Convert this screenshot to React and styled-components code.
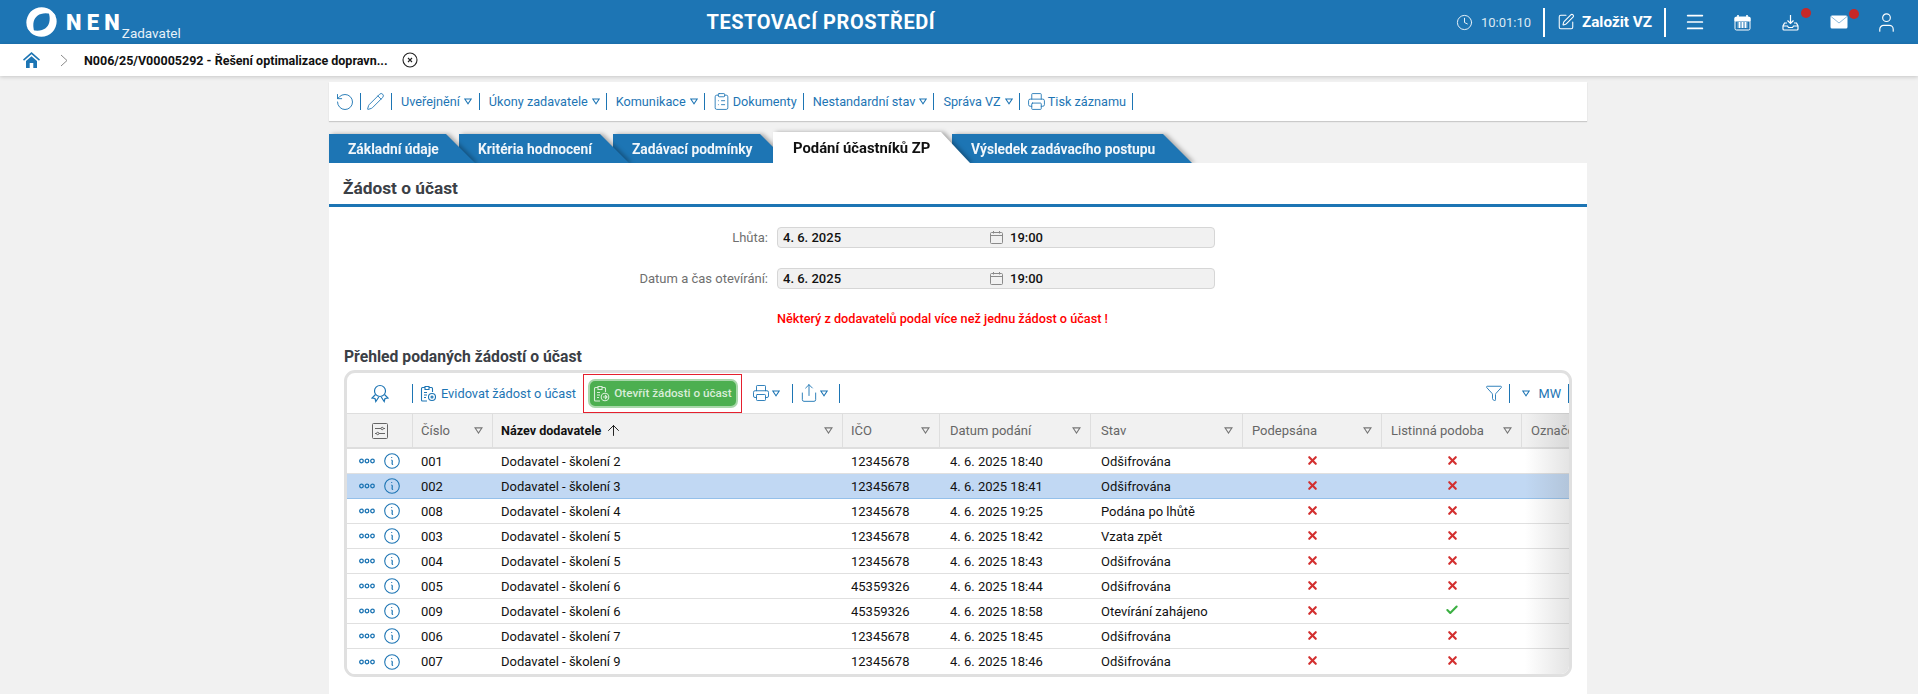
import React from "react";
import styled, { createGlobalStyle } from "styled-components";
import {
  ArrowUp,
  Check,
  Clock,
  ClipboardList,
  Funnel,
  Menu,
  Pencil,
  Printer,
  RotateCcw,
  Share,
  SquarePen,
  User,
  X,
} from "lucide-react";

const BLUE = "#1d75b4";
const COLUMNS = "66px 80px 350px 97px 151px 152px 139px 140px 47px";

const rows = [
  ["001", "Dodavatel - školení 2", "12345678", "4. 6. 2025 18:40", "Odšifrována", false],
  ["002", "Dodavatel - školení 3", "12345678", "4. 6. 2025 18:41", "Odšifrována", false],
  ["008", "Dodavatel - školení 4", "12345678", "4. 6. 2025 19:25", "Podána po lhůtě", false],
  ["003", "Dodavatel - školení 5", "12345678", "4. 6. 2025 18:42", "Vzata zpět", false],
  ["004", "Dodavatel - školení 5", "12345678", "4. 6. 2025 18:43", "Odšifrována", false],
  ["005", "Dodavatel - školení 6", "45359326", "4. 6. 2025 18:44", "Odšifrována", false],
  ["009", "Dodavatel - školení 6", "45359326", "4. 6. 2025 18:58", "Otevírání zahájeno", true],
  ["006", "Dodavatel - školení 7", "12345678", "4. 6. 2025 18:45", "Odšifrována", false],
  ["007", "Dodavatel - školení 9", "12345678", "4. 6. 2025 18:46", "Odšifrována", false],
];

const tabs = [
  { label: "Základní údaje", width: 146, z: 5 },
  { label: "Kritéria hodnocení", width: 170, z: 4 },
  { label: "Zadávací podmínky", width: 176, z: 3 },
  { label: "Podání účastníků ZP", width: 197, z: 6, active: true },
  { label: "Výsledek zadávacího postupu", width: 240, z: 1 },
];

const GlobalStyle = createGlobalStyle`
  html, body {
    margin: 0;
    height: 100%;
    overflow: hidden;
    background: #f1f1f1;
    font-family: Roboto, "Liberation Sans", sans-serif;
    font-size: 13px;
  }
  #root { height: 100%; }
`;

const Page = styled.div`
  height: 100%;
  display: flex;
  flex-direction: column;
`;

const Header = styled.header`
  height: 44px;
  flex: none;
  background: ${BLUE};
  color: #fff;
  display: flex;
  align-items: center;
  justify-content: space-between;
  padding: 0 23px 0 25px;
`;

const Brand = styled.div`
  display: flex;
  align-items: center;
`;

const BrandName = styled.span`
  margin-left: 8px;
  font-size: 22px;
  font-weight: 900;
  letter-spacing: 5.2px;
`;

const BrandRole = styled.span`
  margin: 22px 0 0 -3px;
  font-size: 13.5px;
  color: #e8f1f8;
`;

const EnvTitle = styled.div`
  font-size: 20px;
  font-weight: 700;
  letter-spacing: 0.55px;
  margin-left: 5px;
`;

const HeaderTools = styled.div`
  display: flex;
  align-items: center;
`;

const HeaderTime = styled.span`
  margin-left: 8px;
  width: 62px;
  color: #dce9f3;
`;

const HeaderRule = styled.span`
  width: 2px;
  height: 29px;
  background: #fff;
`;

const CreateLink = styled.span`
  display: flex;
  align-items: center;
  gap: 7px;
  padding: 0 12px;
  font-size: 15.3px;
  font-weight: 700;
`;

const HeaderIcon = styled.span`
  position: relative;
  display: flex;
  justify-content: center;
  width: 17px;
  margin-left: ${(p) => p.$gap}px;

  svg {
    flex: none;
  }
`;

const Dot = styled.i`
  position: absolute;
  top: -6px;
  right: -12px;
  width: 10px;
  height: 10px;
  border-radius: 50%;
  background: #c62828;
`;

const Crumbs = styled.nav`
  height: 32px;
  flex: none;
  background: #fff;
  box-shadow: 0 1px 4px rgba(0, 0, 0, 0.18);
  display: flex;
  align-items: center;
  padding-left: 23px;
  position: relative;
`;

const CrumbChevron = styled.svg`
  margin-left: 20px;
  margin-right: 16px;
`;

const CrumbText = styled.span`
  font-size: 12.5px;
  font-weight: 700;
  color: #111;
  width: 318px;
  white-space: nowrap;
`;

const Main = styled.main`
  flex: 1;
  width: 1258px;
  margin-left: 329px;
  padding-top: 6px;
  display: flex;
  flex-direction: column;
  min-height: 0;
`;

const Toolbar = styled.div`
  height: 39px;
  flex: none;
  background: #fff;
  box-shadow: 0 1px 1px rgba(0, 0, 0, 0.16);
  display: flex;
  align-items: center;
  font-size: 12.7px;
`;

const ToolItem = styled.span`
  height: 17px;
  display: flex;
  align-items: center;
  gap: ${(p) => p.$gap ?? 4}px;
  padding: 0 ${(p) => p.$right ?? 6}px 0 ${(p) => p.$left ?? 9}px;
  border-right: 1px solid ${BLUE};
  color: ${BLUE};
  white-space: nowrap;
`;

const TabRow = styled.div`
  height: 31px;
  flex: none;
  margin-top: 11px;
  display: flex;
  align-items: flex-end;
`;

const Tab = styled.div`
  width: ${(p) => p.$width}px;
  margin-left: ${(p) => p.$overlap}px;
  z-index: ${(p) => p.$z};
  filter: drop-shadow(3px 0 2px rgba(0, 0, 0, 0.3));
`;

const TabFace = styled.div`
  height: ${(p) => (p.$active ? 31 : 29)}px;
  padding: ${(p) => (p.$active ? "8px 0 0 20px" : "7px 0 0 19px")};
  box-sizing: border-box;
  background: ${(p) => (p.$active ? "#fff" : BLUE)};
  color: ${(p) => (p.$active ? "#111" : "#f1f6fa")};
  font-weight: 700;
  font-size: ${(p) => (p.$active ? 14.8 : 13.8)}px;
  line-height: 16px;
  white-space: nowrap;
  clip-path: polygon(0 0, calc(100% - 29px) 0, 100% 100%, 0 100%);
`;

const Panel = styled.section`
  flex: 1;
  background: #fff;
  position: relative;
  z-index: 7;
  min-height: 0;
`;

const PanelTitle = styled.h2`
  margin: 0;
  height: 41px;
  box-sizing: border-box;
  padding: 14px 0 0 14px;
  font-size: 17.3px;
  line-height: 22px;
  font-weight: 700;
  color: #3b4046;
`;

const PanelRule = styled.div`
  height: 3px;
  background: ${BLUE};
`;

const FormGrid = styled.div`
  display: grid;
  grid-template-columns: 439px 438px;
  column-gap: 9px;
  row-gap: 20px;
  margin-top: 20px;
  align-items: center;
`;

const FormLabel = styled.label`
  text-align: right;
  color: #6f6f6f;
`;

const Field = styled.div`
  height: 21px;
  box-sizing: border-box;
  display: flex;
  align-items: center;
  padding-left: 5px;
  background: #f1f1f1;
  border: 1px solid #d6d6d6;
  border-radius: 4px;
  font-weight: 500;
  color: #111;
`;

const FieldDate = styled.span`
  width: 207px;
`;

const FieldTime = styled.span`
  margin-left: 7px;
`;

const Warning = styled.div`
  margin: 22px 0 0 448px;
  line-height: 16px;
  font-size: 12.7px;
  font-weight: 500;
  color: #f00;
`;

const SectionTitle = styled.h3`
  margin: 20px 0 0 15px;
  font-size: 15.7px;
  line-height: 20px;
  font-weight: 700;
  color: #3b4046;
`;

const Card = styled.div`
  position: relative;
  margin: 3px 15px 0 15px;
  border: 3px solid #e0e0e0;
  border-radius: 11px;
  overflow: hidden;
  background: #fff;
`;

const CardBar = styled.div`
  height: 40px;
  display: flex;
  align-items: center;
  font-size: 12.8px;
`;

const AwardSlot = styled.span`
  width: 65px;
  height: 19px;
  display: flex;
  align-items: center;
  justify-content: center;
  border-right: 1px solid ${BLUE};
  color: ${BLUE};
`;

const Highlight = styled.div`
  margin-left: 7px;
  box-sizing: border-box;
  width: 159px;
  height: 39px;
  border: 1px solid #e5202e;
  display: flex;
  align-items: center;
  justify-content: center;
`;

const GreenButton = styled.button`
  width: 150px;
  height: 29px;
  box-sizing: border-box;
  display: flex;
  align-items: center;
  justify-content: center;
  gap: 4px;
  padding: 0;
  background: #4caf50;
  border: 2px solid #a9d8ab;
  border-radius: 7px;
  color: #d9edd9;
  font: 500 11.7px Roboto, sans-serif;
`;

const BarLink = styled.span`
  display: flex;
  align-items: center;
  gap: ${(p) => p.$gap ?? 4}px;
  height: 19px;
  padding: 0 ${(p) => p.$right ?? 6}px 0 ${(p) => p.$left ?? 9}px;
  color: ${BLUE};
  white-space: nowrap;
  border-right: ${(p) => (p.$plain ? "none" : `1px solid ${BLUE}`)};
`;

const BarSpacer = styled.span`
  flex: 1;
`;

const GridHead = styled.div`
  display: grid;
  grid-template-columns: ${COLUMNS};
  height: 36px;
  box-sizing: border-box;
  background: #f1f1f1;
  border-top: 1px solid #dedede;
  border-bottom: 2px solid #dedede;
`;

const HeadCell = styled.div`
  display: flex;
  align-items: center;
  justify-content: ${(p) => (p.$center ? "center" : "flex-start")};
  padding: 0 9px 0 ${(p) => p.$pad ?? 9}px;
  gap: 4px;
  overflow: hidden;
  white-space: nowrap;
  color: ${(p) => (p.$sorted ? "#111" : "#666")};
  font-weight: ${(p) => (p.$sorted ? 700 : 400)};
  font-size: ${(p) => (p.$sorted ? 12.6 : 13)}px;
  border-right: ${(p) => (p.$last ? "none" : "1px solid #dedede")};
`;

const HeadFilter = styled.span`
  margin-left: auto;
  display: flex;
`;

const GridRow = styled.div`
  display: grid;
  grid-template-columns: ${COLUMNS};
  height: 25px;
  box-sizing: border-box;
  align-items: center;
  color: #111;
  background: ${(p) => (p.$selected ? "#c1d8f3" : "#fff")};
  border-bottom: ${(p) => (p.$last ? "none" : p.$selected ? "1px solid #94c0ea" : "1px solid #e0e0e0")};
`;

const RowActions = styled.div`
  display: flex;
  align-items: center;
  gap: 9px;
  padding-left: 12px;
`;

const Cell = styled.div`
  padding-left: ${(p) => p.$pad ?? 8}px;
  white-space: nowrap;
`;

const MarkCell = styled.div`
  display: flex;
  justify-content: center;
  margin-top: -2px;
`;

const RightFade = styled.div`
  position: absolute;
  top: 40px;
  right: 0;
  bottom: 0;
  width: 44px;
  pointer-events: none;
  background: linear-gradient(to right, rgba(120, 120, 120, 0), rgba(120, 120, 120, 0.2));
`;

const Triangle = () => (
  <svg width="8" height="7" viewBox="0 0 10 8" fill="none" stroke={BLUE} strokeWidth="1.3">
    <path d="M1 1h8L5 7z" />
  </svg>
);

const GreyTriangle = () => (
  <svg width="9" height="7" viewBox="0 0 10 8" fill="none" stroke="#777" strokeWidth="1.2">
    <path d="M1 1h8L5 7z" />
  </svg>
);

const Swoosh = ({ flip }) => (
  <path
    transform={flip ? "rotate(180 17 17)" : undefined}
    d="M2.300 24A16 16 0 0 1 32 11C27.500 8 21.500 7 16.500 8.500 10.500 10 7.500 16 8.500 23c.3 2.500 .8 4.500 1.500 6-3-1-6.400-2.500-7.700-5z"
  />
);

const Logo = () => (
  <svg width="33" height="32" viewBox="0 0 34 34" fill="#fff">
    <Swoosh />
    <Swoosh flip />
  </svg>
);

const HomeIcon = () => (
  <svg width="17" height="16" viewBox="0 0 17 16" fill={BLUE}>
    <path d="M8.500 0L0 7.500l1 1.200 7.500-6.400L16 8.700l1-1.200z" />
    <path d="M3 9l5.500-4.700L14 9v7h-3.700v-5H6.700v5H3z" />
  </svg>
);

const CalendarIcon = () => (
  <svg width="17" height="17" viewBox="0 0 17 17" fill="none" stroke="#fff">
    <rect x="1" y="3" width="15" height="13" rx="1.500" strokeWidth="1" />
    <path d="M1 3.500h15V7H1z" fill="#fff" />
    <path d="M4 1v3M13 1v3" strokeWidth="1.600" />
    <path d="M3.500 9h10M3.500 11h10M3.500 13h10M5.500 8v6M8.500 8v6M11.500 8v6" strokeWidth="1" />
  </svg>
);

const DownloadIcon = () => (
  <svg width="17" height="17" viewBox="0 0 17 17" fill="none" stroke="#fff" strokeWidth="1.200">
    <path d="M8.500 1v8M5.500 6.500l3 3 3-3" />
    <path d="M5 9H2.500L1 12v3a1 1 0 0 0 1 1h13a1 1 0 0 0 1-1v-3l-1.500-3H12" />
    <path d="M1 12h4.500l1 1.500h4l1-1.500H16" />
  </svg>
);

const MailIcon = () => (
  <svg width="18" height="14" viewBox="0 0 18 14">
    <rect x="0.500" y="0.500" width="17" height="13" rx="1.500" fill="#fff" />
    <path d="M1 1.500l8 6.500 8-6.500" fill="none" stroke="#8dbbdc" strokeWidth="1" />
  </svg>
);

const FieldCalendar = () => (
  <svg width="13" height="13" viewBox="0 0 13 13" fill="none" stroke="#8a8a8a" strokeWidth="1">
    <rect x="0.500" y="1.500" width="12" height="11" rx="1" />
    <path d="M0.500 4.500h12M3.500 0v2.500M9.500 0v2.500" />
  </svg>
);

const ClearIcon = () => (
  <svg width="16" height="16" viewBox="0 0 16 16" fill="none" stroke="#222" strokeWidth="1.100">
    <circle cx="8" cy="8" r="7" />
    <path d="M6 6l4 4M10 6l-4 4" />
  </svg>
);

const AwardIcon = () => (
  <svg width="18" height="19" viewBox="0 0 18 19" fill="none" stroke={BLUE} strokeWidth="1.200">
    <circle cx="9" cy="7" r="5.500" />
    <path d="M4.500 10.500L1 14l3 .5.800 3 3-4.500M13.500 10.500L17 14l-3 .5-.8 3-3-4.500" />
  </svg>
);

const ClipGearIcon = () => (
  <svg width="17" height="17" viewBox="0 0 17 17" fill="none" stroke={BLUE} strokeWidth="1.100">
    <path d="M7 16H2.500a1 1 0 0 1-1-1V3.500a1 1 0 0 1 1-1H5M9 2.500h2.500a1 1 0 0 1 1 1V7" />
    <path d="M5 1.500h4v3H5zM4 7.500h3M4 10h3M4 12.500h2" />
    <circle cx="12" cy="12" r="3.500" />
    <circle cx="12" cy="12" r="1" />
  </svg>
);

const ClipOpenIcon = () => (
  <svg width="17" height="17" viewBox="0 0 17 17" fill="none" stroke="#d9edd9" strokeWidth="1.100">
    <path d="M7 16H2.500a1 1 0 0 1-1-1V3.500a1 1 0 0 1 1-1H5M9 2.500h2.500a1 1 0 0 1 1 1V7" />
    <path d="M5 1.500h4v3H5zM4 7.500h3M4 10h3M4 12.500h2" />
    <circle cx="12" cy="12" r="3.800" />
    <path d="M10 12h4M12 10l2 2-2 2" />
  </svg>
);

const MoreDots = () => (
  <svg width="16" height="6" viewBox="0 0 16 6" fill="none" stroke={BLUE} strokeWidth="1.300">
    <circle cx="2.500" cy="3" r="1.800" />
    <circle cx="8" cy="3" r="1.800" />
    <circle cx="13.500" cy="3" r="1.800" />
  </svg>
);

const InfoIcon = () => (
  <svg width="16" height="16" viewBox="0 0 16 16" fill="none" stroke={BLUE} strokeWidth="1.100">
    <circle cx="8" cy="8" r="7.300" />
    <path d="M7.200 4.500h1M7.300 7c.6 0 1 .4 1 1l-.2 2.500c0 .7.400 1 1 1" strokeWidth="1.200" />
  </svg>
);

const ColumnSettings = () => (
  <svg width="16" height="16" viewBox="0 0 16 16" fill="none" stroke="#666" strokeWidth="1">
    <rect x="0.500" y="0.500" width="15" height="15" rx="1" />
    <path d="M3 5.500h6M11.500 5.500H13M3 10.500h1.500M7 10.500h6" />
    <circle cx="10.200" cy="5.500" r="1.200" />
    <circle cx="5.700" cy="10.500" r="1.200" />
  </svg>
);

export default function App() {
  return (
    <Page>
      <GlobalStyle />
      <Header>
        <Brand>
          <Logo />
          <BrandName>NEN</BrandName>
          <BrandRole>Zadavatel</BrandRole>
        </Brand>
        <EnvTitle>TESTOVACÍ PROSTŘEDÍ</EnvTitle>
        <HeaderTools>
          <Clock size={17} strokeWidth={1.4} color="#e8f1f8" />
          <HeaderTime>10:01:10</HeaderTime>
          <HeaderRule />
          <CreateLink>
            <SquarePen size={18} strokeWidth={1.4} />
            Založit VZ
          </CreateLink>
          <HeaderRule />
          <HeaderIcon $gap={20}>
            <Menu size={22} strokeWidth={1.9} />
          </HeaderIcon>
          <HeaderIcon $gap={31}>
            <CalendarIcon />
          </HeaderIcon>
          <HeaderIcon $gap={31}>
            <DownloadIcon />
            <Dot />
          </HeaderIcon>
          <HeaderIcon $gap={31}>
            <MailIcon />
            <Dot />
          </HeaderIcon>
          <HeaderIcon $gap={31}>
            <User size={23} strokeWidth={1.2} />
          </HeaderIcon>
        </HeaderTools>
      </Header>

      <Crumbs>
        <HomeIcon />
        <CrumbChevron width="8" height="13" viewBox="0 0 8 13" fill="none" stroke="#8a8a8a">
          <path d="M1 1l6 5.500L1 12" />
        </CrumbChevron>
        <CrumbText>N006/25/V00005292 - Řešení optimalizace dopravn...</CrumbText>
        <ClearIcon />
      </Crumbs>

      <Main>
        <Toolbar>
          <ToolItem $left={6} $right={5}>
            <RotateCcw size={20} strokeWidth={1.1} />
          </ToolItem>
          <ToolItem $left={5} $right={6}>
            <Pencil size={19} strokeWidth={1.1} />
          </ToolItem>
          <ToolItem $right={7}>
            Uveřejnění <Triangle />
          </ToolItem>
          <ToolItem>
            Úkony zadavatele <Triangle />
          </ToolItem>
          <ToolItem>
            Komunikace <Triangle />
          </ToolItem>
          <ToolItem $left={7} $gap={2}>
            <ClipboardList size={19} strokeWidth={1.1} />
            Dokumenty
          </ToolItem>
          <ToolItem>
            Nestandardní stav <Triangle />
          </ToolItem>
          <ToolItem>
            Správa VZ <Triangle />
          </ToolItem>
          <ToolItem $left={7} $gap={2}>
            <Printer size={19} strokeWidth={1.1} />
            Tisk záznamu
          </ToolItem>
        </Toolbar>

        <TabRow>
          {tabs.map((tab, i) => (
            <Tab key={tab.label} $width={tab.width} $z={tab.z} $overlap={i === 0 ? 0 : i === 4 ? -18 : -16}>
              <TabFace $active={tab.active}>{tab.label}</TabFace>
            </Tab>
          ))}
        </TabRow>

        <Panel>
          <PanelTitle>Žádost o účast</PanelTitle>
          <PanelRule />
          <FormGrid>
            <FormLabel>Lhůta:</FormLabel>
            <Field>
              <FieldDate>4. 6. 2025</FieldDate>
              <FieldCalendar />
              <FieldTime>19:00</FieldTime>
            </Field>
            <FormLabel>Datum a čas otevírání:</FormLabel>
            <Field>
              <FieldDate>4. 6. 2025</FieldDate>
              <FieldCalendar />
              <FieldTime>19:00</FieldTime>
            </Field>
          </FormGrid>
          <Warning>Některý z dodavatelů podal více než jednu žádost o účast !</Warning>
          <SectionTitle>Přehled podaných žádostí o účast</SectionTitle>
          <Card>
            <CardBar>
              <AwardSlot>
                <AwardIcon />
              </AwardSlot>
              <BarLink $plain $left={7} $right={0}>
                <ClipGearIcon />
                Evidovat žádost o účast
              </BarLink>
              <Highlight>
                <GreenButton>
                  <ClipOpenIcon />
                  Otevřít žádosti o účast
                </GreenButton>
              </Highlight>
              <BarLink $left={10} $right={12} $gap={2}>
                <Printer size={18} strokeWidth={1.2} />
                <Triangle />
              </BarLink>
              <BarLink $left={6} $right={11} $gap={1}>
                <Share size={20} strokeWidth={1.1} />
                <Triangle />
              </BarLink>
              <BarSpacer />
              <BarLink $right={6}>
                <Funnel size={18} strokeWidth={1.2} />
              </BarLink>
              <BarLink $left={12} $right={7} $gap={8}>
                <Triangle />
                MW
              </BarLink>
            </CardBar>
            <GridHead>
              <HeadCell $center>
                <ColumnSettings />
              </HeadCell>
              <HeadCell $pad={8}>
                Číslo
                <HeadFilter>
                  <GreyTriangle />
                </HeadFilter>
              </HeadCell>
              <HeadCell $sorted $pad={8}>
                Název dodavatele <ArrowUp size={17} strokeWidth={1.3} />
                <HeadFilter>
                  <GreyTriangle />
                </HeadFilter>
              </HeadCell>
              {[
                ["IČO", 8],
                ["Datum podání", 10],
                ["Stav", 10],
                ["Podepsána", 9],
                ["Listinná podoba", 9],
              ].map(([title, pad]) => (
                <HeadCell key={title} $pad={pad}>
                  {title}
                  <HeadFilter>
                    <GreyTriangle />
                  </HeadFilter>
                </HeadCell>
              ))}
              <HeadCell $last>Označení</HeadCell>
            </GridHead>
            {rows.map(([num, name, ico, date, state, listed], i) => (
              <GridRow key={num} $selected={i === 1} $last={i === rows.length - 1}>
                <RowActions>
                  <MoreDots />
                  <InfoIcon />
                </RowActions>
                <Cell>{num}</Cell>
                <Cell>{name}</Cell>
                <Cell>{ico}</Cell>
                <Cell $pad={10}>{date}</Cell>
                <Cell $pad={10}>{state}</Cell>
                <MarkCell>
                  <X size={13} strokeWidth={4} color="#d32f2f" />
                </MarkCell>
                <MarkCell>
                  {listed ? (
                    <Check size={14} strokeWidth={3.6} color="#3cb043" />
                  ) : (
                    <X size={13} strokeWidth={4} color="#d32f2f" />
                  )}
                </MarkCell>
                <span />
              </GridRow>
            ))}
            <RightFade />
          </Card>
        </Panel>
      </Main>
    </Page>
  );
}
